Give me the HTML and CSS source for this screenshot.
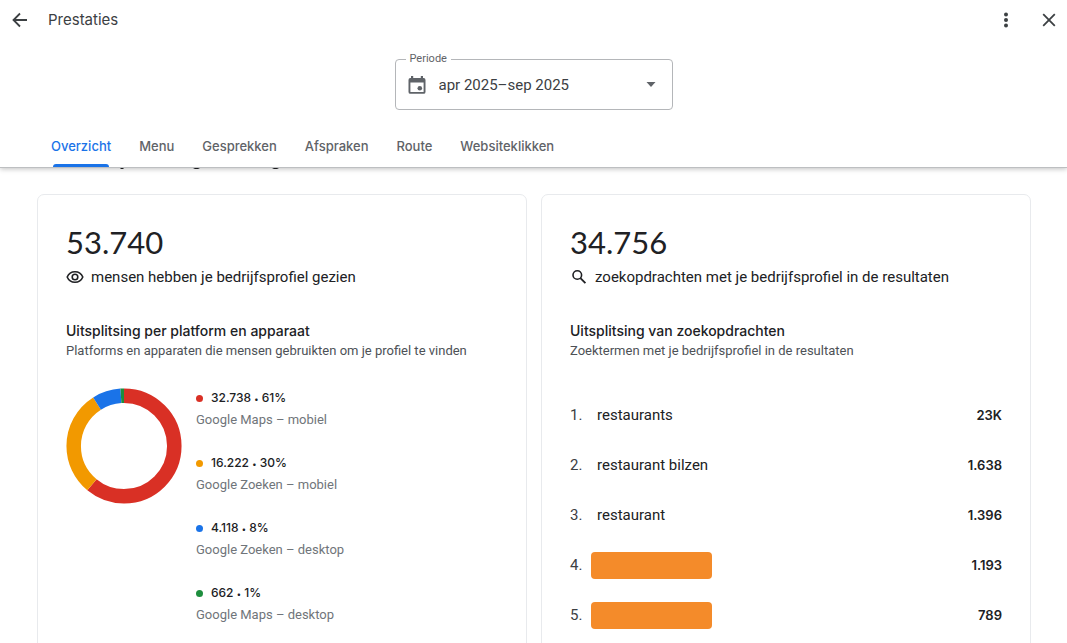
FILE: index.html
```html
<!DOCTYPE html>
<html lang="nl">
<head>
<meta charset="utf-8">
<meta name="viewport" content="width=device-width, initial-scale=1">
<title>Prestaties</title>
<link rel="stylesheet" href="styles.css">
</head>
<body>
<div class="app">
  <header class="header">
    <div class="topbar">
      <button class="icon-button" type="button" aria-label="Terug">
        <svg class="icon" viewBox="0 0 20 20"><path d="M17 10H3.8M10 3.5 3.5 10l6.500 6.500" fill="none" stroke="currentColor" stroke-width="1.800"/></svg>
      </button>
      <h1 class="title">Prestaties</h1>
      <button class="icon-button" type="button" aria-label="Meer opties">
        <svg class="icon" viewBox="0 0 20 20" fill="currentColor"><circle cx="10" cy="4.500" r="2"/><circle cx="10" cy="10" r="2"/><circle cx="10" cy="15.500" r="2"/></svg>
      </button>
      <button class="icon-button" type="button" aria-label="Sluiten">
        <svg class="icon" viewBox="0 0 20 20"><path d="m4.200 4.200 11.600 11.600M15.800 4.200 4.200 15.800" fill="none" stroke="currentColor" stroke-width="1.800"/></svg>
      </button>
    </div>
    <div class="period">
      <label class="period-label" for="period">Periode</label>
      <svg class="period-icon" viewBox="0 0 18 20" aria-hidden="true"><path fill="currentColor" fill-rule="evenodd" d="M3 1h2.200v2h7.600V1H15v2h.6A1.900 1.900 0 0 1 17.500 4.900v12A1.900 1.900 0 0 1 15.600 18.800H2.400A1.900 1.900 0 0 1 .5 16.900v-12A1.900 1.900 0 0 1 2.400 3H3zM2.400 7.400v9.500h13.200V7.400z"/><circle cx="11.800" cy="13.200" r="2.300" fill="currentColor"/></svg>
      <select class="period-select" id="period"><option>apr 2025–sep 2025</option></select>
      <svg class="period-arrow" viewBox="0 0 10 5" aria-hidden="true"><path d="M.5 0h9L5 5z" fill="currentColor"/></svg>
    </div>
    <nav class="tabs">
      <a class="tab tab-active" href="#overzicht" aria-current="page">Overzicht</a>
      <a class="tab" href="#menu">Menu</a>
      <a class="tab" href="#gesprekken">Gesprekken</a>
      <a class="tab" href="#afspraken">Afspraken</a>
      <a class="tab" href="#route">Route</a>
      <a class="tab" href="#websiteklikken">Websiteklikken</a>
    </nav>
  </header>
  <main class="content" id="overzicht">
    <svg class="descenders" viewBox="0 0 200 2" aria-hidden="true"><path d="M3 0h3L5 1H2zM75 0h7l-2 1h-3zM154 0h7l-2 1h-3z" fill="#202124"/></svg>
    <div class="cards">
      <section class="card">
        <p class="total">53.740</p>
        <p class="summary">
          <svg class="summary-icon" viewBox="0 0 18 18" aria-hidden="true"><path d="M1.200 9C2.600 5.600 5.500 3.700 9 3.700S15.400 5.600 16.800 9C15.400 12.400 12.500 14.300 9 14.300S2.600 12.400 1.200 9z" fill="none" stroke="currentColor" stroke-width="1.600"/><circle cx="9" cy="9" r="2.800" fill="none" stroke="currentColor" stroke-width="1.600"/></svg>
          mensen hebben je bedrijfsprofiel gezien
        </p>
        <h2 class="subtitle">Uitsplitsing per platform en apparaat</h2>
        <p class="caption">Platforms en apparaten die mensen gebruikten om je profiel te vinden</p>
        <div class="breakdown">
          <svg class="donut" viewBox="0 0 116 116" role="img" aria-label="61% Google Maps – mobiel, 30% Google Zoeken – mobiel, 8% Google Zoeken – desktop, 1% Google Maps – desktop">
            <g fill="none" stroke-width="14.500" transform="rotate(-90 58 58)">
              <circle cx="58" cy="58" r="50.300" pathLength="100" stroke="#d93025" stroke-dasharray="61 39"/>
              <circle cx="58" cy="58" r="50.300" pathLength="100" stroke="#f29900" stroke-dasharray="30 70" stroke-dashoffset="-61"/>
              <circle cx="58" cy="58" r="50.300" pathLength="100" stroke="#1a73e8" stroke-dasharray="8 92" stroke-dashoffset="-91"/>
              <circle cx="58" cy="58" r="50.300" pathLength="100" stroke="#1e8e3e" stroke-dasharray="1 99" stroke-dashoffset="-99"/>
            </g>
          </svg>
          <ul class="legend">
            <li class="legend-item"><span class="legend-value red"><span>32.738 <span class="bullet">•</span> 61%</span></span><span class="legend-name">Google Maps – mobiel</span></li>
            <li class="legend-item"><span class="legend-value orange"><span>16.222 <span class="bullet">•</span> 30%</span></span><span class="legend-name">Google Zoeken – mobiel</span></li>
            <li class="legend-item"><span class="legend-value blue"><span>4.118 <span class="bullet">•</span> 8%</span></span><span class="legend-name">Google Zoeken – desktop</span></li>
            <li class="legend-item"><span class="legend-value green"><span>662 <span class="bullet">•</span> 1%</span></span><span class="legend-name">Google Maps – desktop</span></li>
          </ul>
        </div>
      </section>
      <section class="card">
        <p class="total">34.756</p>
        <p class="summary">
          <svg class="summary-icon" viewBox="0 0 18 18" aria-hidden="true"><circle cx="7.300" cy="7" r="4.300" fill="none" stroke="currentColor" stroke-width="1.600"/><path d="m10.400 10.200 5 5" stroke="currentColor" stroke-width="1.900"/></svg>
          zoekopdrachten met je bedrijfsprofiel in de resultaten
        </p>
        <h2 class="subtitle">Uitsplitsing van zoekopdrachten</h2>
        <p class="caption">Zoektermen met je bedrijfsprofiel in de resultaten</p>
        <ol class="terms">
          <li class="term"><span class="rank">1.</span><span class="term-name">restaurants</span><span class="count">23K</span></li>
          <li class="term"><span class="rank">2.</span><span class="term-name">restaurant bilzen</span><span class="count">1.638</span></li>
          <li class="term"><span class="rank">3.</span><span class="term-name">restaurant</span><span class="count">1.396</span></li>
          <li class="term"><span class="rank">4.</span><span class="redacted"></span><span class="count">1.193</span></li>
          <li class="term"><span class="rank">5.</span><span class="redacted"></span><span class="count">789</span></li>
        </ol>
      </section>
    </div>
  </main>
</div>
</body>
</html>
```
FILE: styles.css
```css
* { box-sizing: border-box; }

body {
  margin: 0;
  background: #fff;
  color: #202124;
  font-family: Roboto, "Liberation Sans", sans-serif;
}

h1, h2, p, ul, ol { margin: 0; padding: 0; list-style: none; }

.app {
  display: flex;
  flex-direction: column;
  height: 100vh;
}

.header {
  position: relative;
  flex: none;
  border-bottom: 1px solid #bdbfc1;
  box-shadow: 0 1px 5px rgba(0, 0, 0, 0.25);
}

.topbar {
  display: flex;
  align-items: center;
  height: 40px;
  padding: 0 8px 0 10px;
  color: #3c4043;
}

.title {
  flex: 1;
  padding-left: 18px;
  font: 400 15px/20px Inter, sans-serif;
}

.icon-button {
  display: flex;
  padding: 0;
  border: 0;
  background: none;
  color: inherit;
}

.icon-button + .icon-button { margin-left: 23px; }

.icon { width: 20px; height: 20px; }

.period {
  position: relative;
  display: flex;
  align-items: center;
  width: 278px;
  height: 51px;
  margin: 19px auto 0;
  color: #5f6368;
}

.period-label {
  position: absolute;
  top: -8px;
  left: 11px;
  padding: 0 4px;
  background: #fff;
  font-size: 11px;
  line-height: 16px;
}

.period-select {
  appearance: none;
  width: 100%;
  height: 100%;
  padding: 0 32px 0 43px;
  border: 1px solid #b4b6b9;
  border-radius: 4px;
  background: none;
  color: #3c4043;
  font: 400 15px/20px Roboto, sans-serif;
}

.period-icon {
  position: absolute;
  left: 13px;
  width: 18px;
  height: 20px;
}

.period-arrow {
  position: absolute;
  right: 17px;
  width: 10px;
  height: 5px;
}

.tabs {
  display: flex;
  gap: 28px;
  padding: 15px 51px 0;
}

.tab {
  padding: 11px 0;
  color: #5f6368;
  font: 500 13px/20px Inter, sans-serif;
  text-decoration: none;
}

.tab-active {
  position: relative;
  color: #1a73e8;
}

.tab-active::after {
  content: "";
  position: absolute;
  right: 2px;
  bottom: 0;
  left: 2px;
  height: 3px;
  border-radius: 3px 3px 0 0;
  background: #1a73e8;
}

.content {
  flex: 1;
  min-height: 0;
  overflow: auto;
  scrollbar-width: none;
}

.descenders {
  display: block;
  width: 200px;
  height: 2px;
  margin-left: 118px;
}

.cards {
  display: grid;
  grid-template-columns: 1fr 1fr;
  gap: 14px;
  padding: 24px 36px 24px 37px;
}

.card {
  padding: 27px 28px 32px;
  border: 1px solid #e8eaed;
  border-radius: 7px;
}

.total { font: 400 31px/40px Lato, sans-serif; }

.summary {
  display: flex;
  align-items: center;
  gap: 7px;
  margin-top: 5px;
  font-size: 15px;
  line-height: 20px;
}

.summary-icon { flex: none; width: 18px; height: 18px; }

.subtitle {
  margin-top: 34px;
  font: 500 14px/20px Inter, sans-serif;
}

.caption {
  color: #4d5156;
  font-size: 13px;
  line-height: 20px;
}

.breakdown {
  display: flex;
  align-items: flex-start;
  gap: 14px;
  margin-top: 27px;
}

.donut { flex: none; width: 116px; height: 116px; }

.legend { display: grid; gap: 23px; }

.legend-item {
  display: grid;
  gap: 2px;
  color: #70757a;
  font-size: 13px;
  line-height: 20px;
}

.legend-value {
  display: flex;
  align-items: center;
  gap: 8px;
  color: #202124;
  font: 500 12px/20px Inter, sans-serif;
}

.legend-value::before {
  content: "";
  width: 7px;
  height: 7px;
  border-radius: 50%;
  background: currentColor;
}

.bullet {
  font-size: 8px;
  line-height: 1;
}

.red::before { background: #d93025; }
.orange::before { background: #f29900; }
.blue::before { background: #1a73e8; }
.green::before { background: #1e8e3e; }

.terms { margin-top: 29px; }

.term {
  display: flex;
  align-items: center;
  height: 50px;
  font-size: 15px;
}

.rank { width: 21px; color: #3c4043; }

.term-name { padding-left: 6px; }

.redacted {
  width: 121px;
  height: 27px;
  border-radius: 4px;
  background: #f48b2a;
}

.count {
  margin-left: auto;
  font: 600 13px/20px Inter, sans-serif;
}
```
